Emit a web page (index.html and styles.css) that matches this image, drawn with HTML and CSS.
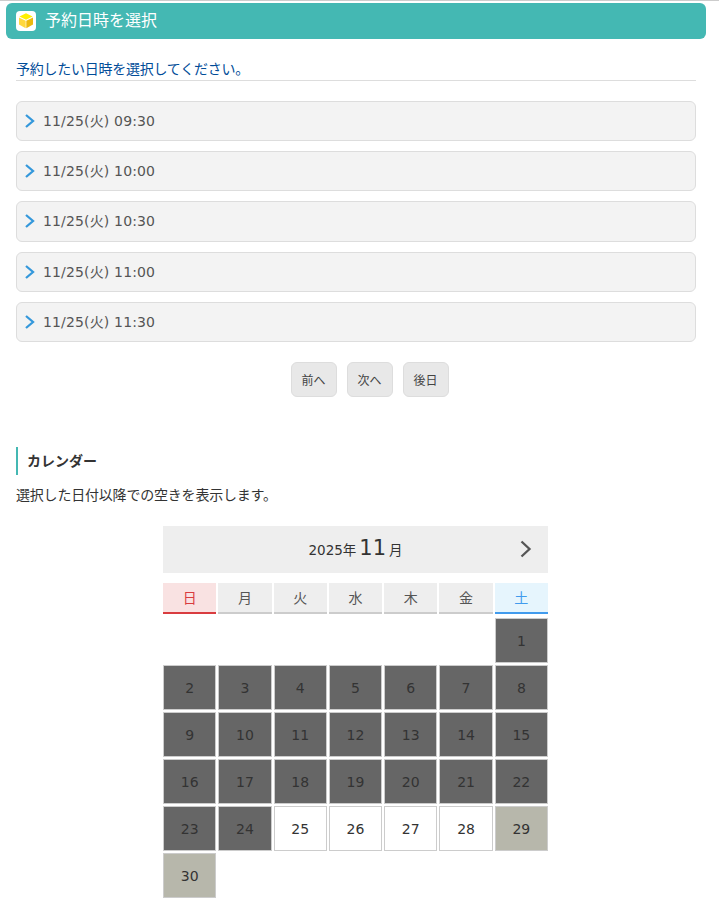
FILE: index.html
```html
<!DOCTYPE html>
<html lang="ja">
	<head>
		<meta charset="utf-8">
		<title>予約日時を選択</title>
		<link rel="stylesheet" href="styles.css">
	</head>
	<body>
		<h1 class="title">
			<svg class="logo" viewBox="0 0 20 20">
				<rect width="20" height="20" rx="4" fill="#fff"/>
				<path d="M10 2.2L16.6 5.6L10 8.8L3.4 5.6Z" fill="#fff000"/>
				<path d="M3 6.4L9.7 9.7V17.2L3 13.6Z" fill="#ffd83d"/>
				<path d="M17 6.4L10.3 9.7V17.2L17 13.6Z" fill="#edb90c"/>
			</svg>
			<span>予約日時を選択</span>
		</h1>
		<div class="main">
			<p class="lead">予約したい日時を選択してください。</p>
			<ul class="times">
				<li><svg class="arrow" viewBox="0 0 10 14"><path d="M1 1L8 7L1 13"/></svg>11/25(火) 09:30</li>
				<li><svg class="arrow" viewBox="0 0 10 14"><path d="M1 1L8 7L1 13"/></svg>11/25(火) 10:00</li>
				<li><svg class="arrow" viewBox="0 0 10 14"><path d="M1 1L8 7L1 13"/></svg>11/25(火) 10:30</li>
				<li><svg class="arrow" viewBox="0 0 10 14"><path d="M1 1L8 7L1 13"/></svg>11/25(火) 11:00</li>
				<li><svg class="arrow" viewBox="0 0 10 14"><path d="M1 1L8 7L1 13"/></svg>11/25(火) 11:30</li>
			</ul>
			<div class="pager">
				<a>前へ</a>
				<a>次へ</a>
				<a>後日</a>
			</div>
			<h2 class="subtitle">カレンダー</h2>
			<p class="note">選択した日付以降での空きを表示します。</p>
			<div class="calendar">
				<div class="month">
					<p><span>2025年</span><b>11</b><span>月</span></p>
					<svg class="next" viewBox="0 0 12 18"><path d="M1.5 1.5L9.5 9L1.5 16.5"/></svg>
				</div>
				<div class="week">
					<span class="sun">日</span>
					<span>月</span>
					<span>火</span>
					<span>水</span>
					<span>木</span>
					<span>金</span>
					<span class="sat">土</span>
				</div>
				<div class="days">
					<span class="past first">1</span>
					<span class="past">2</span>
					<span class="past">3</span>
					<span class="past">4</span>
					<span class="past">5</span>
					<span class="past">6</span>
					<span class="past">7</span>
					<span class="past">8</span>
					<span class="past">9</span>
					<span class="past">10</span>
					<span class="past">11</span>
					<span class="past">12</span>
					<span class="past">13</span>
					<span class="past">14</span>
					<span class="past">15</span>
					<span class="past">16</span>
					<span class="past">17</span>
					<span class="past">18</span>
					<span class="past">19</span>
					<span class="past">20</span>
					<span class="past">21</span>
					<span class="past">22</span>
					<span class="past">23</span>
					<span class="past">24</span>
					<span>25</span>
					<span>26</span>
					<span>27</span>
					<span>28</span>
					<span class="closed">29</span>
					<span class="closed">30</span>
				</div>
			</div>
		</div>
	</body>
</html>
```

FILE: styles.css
```css
*{
	margin:0;
	padding:0;
	box-sizing:border-box;
	list-style:none;
}
body{
	height:902px;
	overflow:hidden;
	border-top:1px solid #ccc;
	background:#fff;
	color:#333;
	font-family:"DejaVu Sans","Noto Sans CJK JP",sans-serif;
	font-size:14px;
	line-height:20px;
}
.title{
	display:flex;
	align-items:center;
	width:700px;
	height:36px;
	margin:2px 0 0 6px;
	padding:0 10px;
	border-radius:6px;
	background:#44b8b3;
	color:#fff;
	font-size:16px;
	font-weight:normal;
}
.logo{
	width:20px;
	height:20px;
	margin-right:9px;
}
.main{
	width:680px;
	margin-left:16px;
}
.lead{
	height:42px;
	padding-top:20px;
	border-bottom:1px solid #ddd;
	color:#004c98;
	letter-spacing:-0.25px;
}
.times{
	margin-top:20px;
}
.times li{
	display:flex;
	align-items:center;
	height:40.2px;
	margin-bottom:10px;
	padding-left:8px;
	border:1px solid #ddd;
	border-radius:6px;
	background:#f3f3f3;
	color:#555;
	letter-spacing:0.15px;
}
.arrow{
	width:10px;
	height:14px;
	margin-right:8px;
	fill:none;
	stroke:#3498db;
	stroke-width:2.3;
}
.pager{
	display:flex;
	gap:10px;
	margin:20px 0 0 275px;
}
.pager a{
	width:46px;
	height:35px;
	padding-right:1px;
	border:1px solid #ddd;
	border-radius:6px;
	background:#e8e8e8;
	color:#444;
	font-size:12px;
	line-height:36px;
	text-align:center;
}
.subtitle{
	height:28px;
	margin-top:50px;
	padding-left:9px;
	border-left:2px solid #44b8b3;
	font-size:14px;
	line-height:28px;
}
.note{
	margin-top:10px;
	letter-spacing:-0.2px;
}
.calendar{
	width:385px;
	margin:21px 0 0 147px;
}
.month{
	display:flex;
	align-items:center;
	height:47px;
	padding-right:16px;
	background:#eee;
	font-size:13.5px;
}
.month p{
	flex:1;
	padding-left:28px;
	text-align:center;
}
.month b{
	margin:0 3px;
	font-size:21px;
	font-weight:normal;
}
.next{
	width:12px;
	height:18px;
	fill:none;
	stroke:#555;
	stroke-width:2.3;
}
.week,
.days{
	display:grid;
	grid-template-columns:repeat(7,1fr);
	gap:2px;
	text-align:center;
}
.week{
	margin:10px 0 4px;
}
.week span{
	height:31px;
	border-bottom:2px solid #ccc;
	background:#eee;
	color:#555;
	line-height:31px;
}
.week .sun{
	border-color:#d93c3f;
	background:#f9e2e2;
	color:#d93c3f;
}
.week .sat{
	border-color:#419bed;
	background:#e6f5fd;
	color:#419bed;
}
.days span{
	height:45px;
	border:1px solid #ccc;
	line-height:44px;
}
.days .first{
	grid-column:7;
}
.days .past{
	background:#666;
}
.days .closed{
	background:#b7b7ab;
}
```
